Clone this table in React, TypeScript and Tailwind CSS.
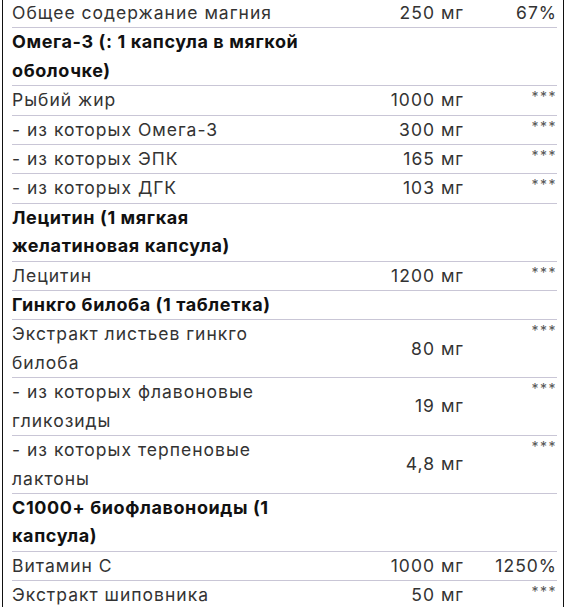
type Row = {
  lines: string[]
  bold?: boolean
  amount?: string
  pct?: string
}

const rows: Row[] = [
  { lines: ["Общее содержание магния"], amount: "250 мг", pct: "67%" },
  { lines: ["Омега-3 (: 1 капсула в мягкой", "оболочке)"], bold: true },
  { lines: ["Рыбий жир"], amount: "1000 мг", pct: "***" },
  { lines: ["- из которых Омега-3"], amount: "300 мг", pct: "***" },
  { lines: ["- из которых ЭПК"], amount: "165 мг", pct: "***" },
  { lines: ["- из которых ДГК"], amount: "103 мг", pct: "***" },
  { lines: ["Лецитин (1 мягкая", "желатиновая капсула)"], bold: true },
  { lines: ["Лецитин"], amount: "1200 мг", pct: "***" },
  { lines: ["Гинкго билоба (1 таблетка)"], bold: true },
  { lines: ["Экстракт листьев гинкго", "билоба"], amount: "80 мг", pct: "***" },
  { lines: ["- из которых флавоновые", "гликозиды"], amount: "19 мг", pct: "***" },
  { lines: ["- из которых терпеновые", "лактоны"], amount: "4,8 мг", pct: "***" },
  { lines: ["C1000+ биофлавоноиды (1", "капсула)"], bold: true },
  { lines: ["Витамин C"], amount: "1000 мг", pct: "1250%" },
  { lines: ["Экстракт шиповника"], amount: "50 мг", pct: "***" },
]

export default function App() {
  return (
    <div className="h-[608px] w-[567px] overflow-hidden bg-white">
      <div className="ml-[2px] h-full w-[562px] border-x border-[#111] pl-[9px] pr-[6px]">
        <table
          className="-mt-[1px] w-full border-collapse text-[17.5px] leading-[28.4px] tracking-[1px] text-[#333]"
          style={{ fontFamily: "Inter, 'Noto Sans', sans-serif" }}
        >
          <colgroup>
            <col className="w-[300px]" />
            <col className="w-[152px]" />
            <col />
          </colgroup>
          <tbody>
            {rows.map((r, i) => (
              <tr key={i} className="border-b border-[#c9c6d6]">
                <td
                  className={`whitespace-nowrap p-0 align-middle ${
                    r.bold ? "text-[18px] font-bold tracking-[0.6px] text-[#111]" : ""
                  }`}
                >
                  {r.lines.map((l, j) => (
                    <div key={j}>{l}</div>
                  ))}
                </td>
                <td className="p-0 text-right align-middle whitespace-nowrap">{r.amount}</td>
                {r.pct === "***" ? (
                  <td className="p-0 text-right align-top">
                    <div className="pt-[4px] text-[14px] leading-[14px] tracking-[1.5px] text-[#555]">***</div>
                  </td>
                ) : (
                  <td className="p-0 text-right align-middle whitespace-nowrap">{r.pct}</td>
                )}
              </tr>
            ))}
          </tbody>
        </table>
      </div>
    </div>
  )
}
